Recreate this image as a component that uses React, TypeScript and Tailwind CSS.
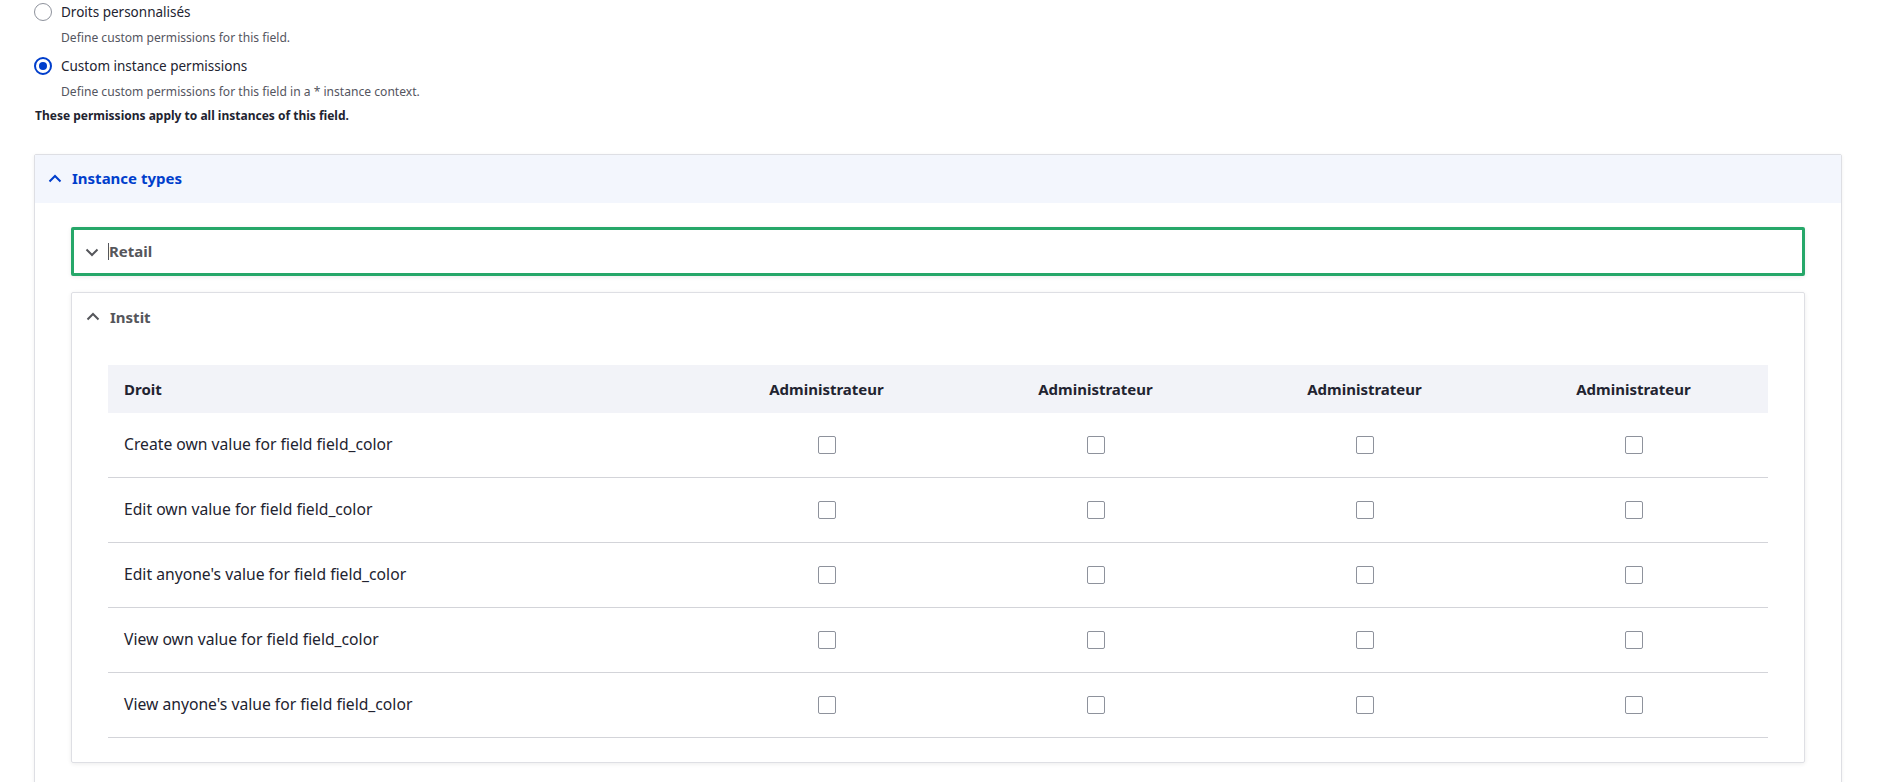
import React from 'react';

const ROWS = [
  'Create own value for field field_color',
  'Edit own value for field field_color',
  "Edit anyone's value for field field_color",
  'View own value for field field_color',
  "View anyone's value for field field_color",
];

const ROLES = ['Administrateur', 'Administrateur', 'Administrateur', 'Administrateur'];

function Chevron({ up, className }: { up?: boolean; className?: string }) {
  return (
    <svg width="14" height="14" viewBox="0 0 14 14" className={className} fill="none">
      {up ? (
        <polyline points="1.5,9.5 7,4 12.5,9.5" stroke="currentColor" strokeWidth="2" />
      ) : (
        <polyline points="1.5,4.5 7,10 12.5,4.5" stroke="currentColor" strokeWidth="2" />
      )}
    </svg>
  );
}

function Radio({ checked, label, description }: { checked?: boolean; label: string; description: string }) {
  return (
    <div>
      <div className="flex items-center gap-[9px] h-[18px]">
        {checked ? (
          <span className="w-[18px] h-[18px] rounded-full border-2 border-[#003ecc] flex items-center justify-center">
            <span className="w-[8px] h-[8px] rounded-full bg-[#003ecc]" />
          </span>
        ) : (
          <span className="w-[18px] h-[18px] rounded-full border border-[#8e929c] bg-white" />
        )}
        <span className="text-[13.5px] text-[#222330] leading-[18px]">{label}</span>
      </div>
      <p className="mt-[9px] pl-[27px] text-[12.1px] leading-4 text-[#545560]">{description}</p>
    </div>
  );
}

function Checkbox() {
  return <span className="block w-[18px] h-[18px] rounded-[2px] border border-[#8e929c] bg-white" />;
}

export default function App() {
  return (
    <div
      className="min-h-screen bg-white pl-[34px] pr-[38px] pt-[3px] pb-10"
      style={{ fontFamily: '"Noto Sans", "Open Sans", sans-serif' }}
    >
      {/* Radios */}
      <Radio label="Droits personnalisés" description="Define custom permissions for this field." />
      <div className="mt-[11px]">
        <Radio
          checked
          label="Custom instance permissions"
          description="Define custom permissions for this field in a * instance context."
        />
      </div>
      <p className="mt-[8px] pl-[1px] text-[12px] leading-4 font-bold text-[#222330]">
        These permissions apply to all instances of this field.
      </p>

      {/* Instance types */}
      <div className="mt-[30px] border border-[#dedfe4] rounded-[2px] shadow-[0_1px_4px_rgba(0,0,0,0.06)] bg-white">
        <div className="h-12 bg-[#f3f6fd] flex items-center pl-[13px] gap-[10px] text-[#003ecc]">
          <Chevron up />
          <span className="text-[15px] font-bold leading-5 -mt-[2px]">Instance types</span>
        </div>

        <div className="px-9 pt-6 pb-16">
          {/* Retail (focused) */}
          <div className="h-[49px] border-[3px] border-[#26a769] rounded-[2px] shadow-[0_1px_4px_rgba(0,0,0,0.08)] flex items-center pl-[11px] text-[#55565b]">
            <Chevron />
            <span className="ml-[9px] w-px h-[17px] bg-[#55565b]" />
            <span className="text-[15px] font-bold">Retail</span>
          </div>

          {/* Instit */}
          <div className="mt-[16px] border border-[#dedfe4] rounded-[2px] shadow-[0_1px_4px_rgba(0,0,0,0.08)]">
            <div className="h-12 flex items-center pl-[14px] gap-[10px] text-[#55565b]">
              <Chevron up />
              <span className="text-[15px] font-bold">Instit</span>
            </div>

            <div className="px-9 pt-6 pb-6">
              <div className="grid grid-cols-[1fr_269px_269px_269px_269px] h-12 items-center bg-[#f2f3f8] text-[15px] font-bold text-[#222330]">
                <span className="pl-4">Droit</span>
                {ROLES.map((role, i) => (
                  <span key={i} className="text-center">
                    {role}
                  </span>
                ))}
              </div>
              {ROWS.map((row) => (
                <div
                  key={row}
                  className="grid grid-cols-[1fr_269px_269px_269px_269px] h-[65px] items-center border-b border-[#d3d4d9] text-[15.7px] text-[#222330]"
                >
                  <span className="pl-4">{row}</span>
                  {ROLES.map((_, i) => (
                    <span key={i} className="flex justify-center">
                      <Checkbox />
                    </span>
                  ))}
                </div>
              ))}
            </div>
          </div>
        </div>
      </div>
    </div>
  );
}
